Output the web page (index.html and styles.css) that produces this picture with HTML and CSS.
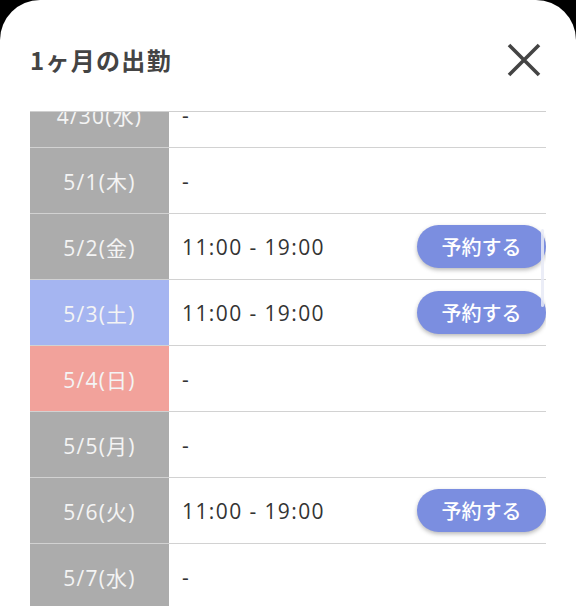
FILE: index.html
```html
<!DOCTYPE html>
<html lang="ja">
<head>
<meta charset="utf-8">
<link rel="stylesheet" href="styles.css">
</head>
<body>
<div class="sheet">
  <div class="header">
    <h1 class="title">1ヶ月の出勤</h1>
    <button class="close" aria-label="閉じる">
      <svg width="36" height="36" viewBox="0 0 36 36"><path d="M3 3 L33 33 M33 3 L3 33" stroke="#444" stroke-width="3.6" stroke-linecap="butt" fill="none"/></svg>
    </button>
  </div>
  <div class="list">
    <div class="rows">
      <div class="row"><div class="date">4/30(水)</div><div class="time">-</div></div>
      <div class="row"><div class="date">5/1(木)</div><div class="time">-</div></div>
      <div class="row"><div class="date">5/2(金)</div><div class="time">11:00 - 19:00</div><button class="reserve">予約する</button></div>
      <div class="row"><div class="date sat">5/3(土)</div><div class="time">11:00 - 19:00</div><button class="reserve">予約する</button></div>
      <div class="row"><div class="date sun">5/4(日)</div><div class="time">-</div></div>
      <div class="row"><div class="date">5/5(月)</div><div class="time">-</div></div>
      <div class="row"><div class="date">5/6(火)</div><div class="time">11:00 - 19:00</div><button class="reserve">予約する</button></div>
      <div class="row"><div class="date">5/7(水)</div><div class="time">-</div></div>
    </div>
    <div class="thumb"></div>
  </div>
</div>
</body>
</html>
```
FILE: styles.css
```css
html, body {
  margin: 0;
  padding: 0;
  background: #000;
}
body {
  font-family: "Open Sans", "Noto Sans CJK JP", sans-serif;
  width: 576px;
  height: 606px;
  overflow: hidden;
}
.sheet {
  background: #fff;
  border-radius: 40px 40px 0 0;
  height: 606px;
  padding: 0 30px;
  box-sizing: border-box;
  overflow: hidden;
}
.header {
  display: flex;
  align-items: center;
  justify-content: space-between;
  height: 36px;
  padding-top: 42px;
  margin-bottom: 33px;
}
.title {
  margin: 0;
  font-family: "Noto Sans CJK JP", sans-serif;
  font-size: 24px;
  font-weight: 700;
  color: #444;
  letter-spacing: 1.3px;
  line-height: 1;
}
.close {
  border: 0;
  background: none;
  padding: 0;
  margin-right: 4px;
  width: 36px;
  height: 36px;
  display: flex;
}
.list {
  border-top: 1px solid #cfcfcf;
  height: 495px;
  overflow: hidden;
  position: relative;
}
.rows {
  margin-top: -30px;
}
.row {
  display: flex;
  align-items: center;
  height: 66px;
  border-bottom: 1px solid #d2d2d2;
  box-sizing: border-box;
}
.date {
  width: 139px;
  align-self: stretch;
  background: #acacac;
  color: #f4f4f4;
  font-size: 21px;
  letter-spacing: 1.2px;
  display: flex;
  align-items: center;
  justify-content: center;
  flex-shrink: 0;
}
.date.sat { background: #a5b5f1; }
.date.sun { background: #f2a29b; }
.time {
  flex: 1;
  padding-left: 13px;
  font-size: 21px;
  letter-spacing: 1.4px;
  color: #333;
}
.reserve {
  width: 129px;
  height: 43px;
  border: 0;
  border-radius: 22px;
  background: #7b8ee0;
  color: #fff;
  font-family: "Noto Sans CJK JP", sans-serif;
  font-size: 20px;
  font-weight: 500;
  box-shadow: 0 2px 4px rgba(0, 0, 0, 0.28);
  padding: 0;
}
.thumb {
  position: absolute;
  right: 2px;
  top: 117px;
  width: 3px;
  height: 78px;
  border-radius: 2px;
  background: rgba(232, 234, 246, 0.85);
}
```
